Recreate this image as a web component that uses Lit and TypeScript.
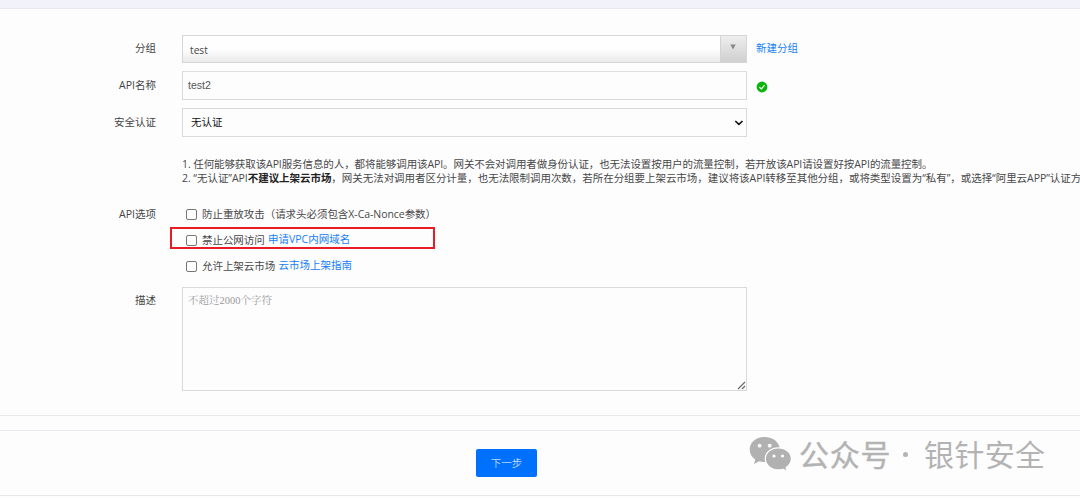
import { LitElement, html, css, svg } from "lit";
import { customElement, property } from "lit/decorators.js";

@customElement("form-row")
class FormRow extends LitElement {
  @property() label = "";
  static styles = css`
    :host { display: flex; align-items: flex-start; }
    .label { width: 156px; margin-right: 26px; text-align: right; flex: none; line-height: 16px; padding-top: var(--label-top, 5px); color: #444; }
  `;
  render() {
    return html`<div class="label">${this.label}</div><slot></slot>`;
  }
}

@customElement("app-root")
class AppRoot extends LitElement {
  static styles = css`
    :host { display: block; width: 1080px; height: 498px; overflow: hidden; position: relative; background: #fdfdfe;
      font: 10.5px/16px "Open Sans", "Noto Sans CJK SC", sans-serif; color: #484848; white-space: nowrap; }
    * { box-sizing: border-box; }
    .topbar { height: 9px; background: #f1f2fa; border-bottom: 1px solid #e6e8f2; }
    .form { padding-top: 26px; height: 406px; }
    .link { color: #1780f7; }
    .field { width: 565px; border: 1px solid #d9d9d9; flex: none; display: flex; }
    .group { height: 28px; --label-top: 5px; margin-bottom: 8px; }
    .name { height: 29px; --label-top: 6px; margin-bottom: 8px; }
    .auth { height: 29px; --label-top: 6px; margin-bottom: 20px; }
    .picker { height: 28px; background: linear-gradient(#fefefe 50%, #eaeaea); border-color: #d6d6d6; justify-content: space-between; }
    .picker-text { padding: 6px 0 0 7px; font-size: 10.2px; }
    .picker-arrow { width: 26px; border-left: 1px solid #d3d3d3; background: linear-gradient(#eee, #cfcfcf); padding: 8px 0 0 9px; }
    .picker-arrow svg, .valid, .chevron { display: block; }
    .beside { margin: 5px 0 0 9px; }
    .input { height: 29px; border-top-color: #dedede; font-family: "Liberation Sans", sans-serif; padding: 5px 0 0 5px; color: #555; }
    .valid { margin: 10px 0 0 9px; }
    .native { height: 29px; padding: 5px 2px 0 8px; color: #111; justify-content: space-between; }
    .chevron { margin-top: 4px; }
    .notes { padding-left: 182px; line-height: 14px; height: 28px; margin-bottom: 16px; }
    .notes b { color: #222; }
    .first { letter-spacing: -0.09px; }
    .second { letter-spacing: -0.045px; }
    .options { --label-top: 5px; height: 86px; }
    .list { display: flex; flex-direction: column; }
    .option { height: 26px; display: flex; align-items: center; padding-left: 4px; }
    .box { width: 11px; height: 11px; border: 1px solid #767676; border-radius: 2px; background: #fff; margin-right: 5px; }
    .option .link { margin-left: 3px; position: relative; top: -1px; }
    .option .text { letter-spacing: -0.05px; }
    .option .text + .link { margin-left: 3.3px; }
    .mark { position: absolute; left: 170px; top: 227px; width: 265px; height: 22px; border: 2px solid #e91c26; }
    .area { height: 104px; position: relative; padding: 5px 0 0 5px; color: #999; font-family: "Liberation Serif", "Noto Serif CJK SC", "Noto Sans CJK SC", serif; }
    .grip { position: absolute; right: 0; bottom: 0; }
    .divider { height: 16px; border-top: 1px solid #e8e9ec; border-bottom: 1px solid #e8eaf0; }
    .footer { height: 65px; border-bottom: 1px solid #e6e7ea; display: flex; padding: 18px 0 0 476px; }
    .next { width: 61px; height: 28px; border-radius: 2px; background: #0070ff; color: #fff; line-height: 28px; text-align: center; font-weight: 300; }
    .brand { position: absolute; left: 749px; top: 432px; display: flex; align-items: center; height: 44px; color: #b3b3b3; font: 30px/44px "Noto Sans CJK SC", sans-serif; letter-spacing: 0.7px; }
    .brand svg { margin: 0 7px 0 0; }
    .brand span { position: relative; top: -1px; }
    .brand .dot { width: 5px; height: 5px; border-radius: 50%; background: #b3b3b3; margin: 0 16px 0 12px; top: 0; }
    .official { -webkit-text-stroke: 0.4px #b3b3b3; }
    .account { letter-spacing: 0.3px; }
  `;

  private option(text: string, link = "") {
    return html`<div class="option"><span class="box"></span><span class="text">${text}</span>${link ? html`<span class="link">${link}</span>` : ""}</div>`;
  }

  private logo() {
    return svg`<svg width="43" height="36" viewBox="0 0 43 36">
      <path fill="#b1b1b1" d="M15.500 1C7 1 .7 6.500 .7 13.500c0 4.200 2.100 7.600 5.600 10l-1.300 4.400 5.200-2.600c2 .6 3.700.8 5.800.8 8.500 0 14.800-5.500 14.800-12.600S24 1 15.500 1Z"/>
      <path fill="#b1b1b1" stroke="#fdfdfe" stroke-width="1.300" d="M29.300 11.800c-7.400 0-13 4.900-13 11s5.600 11.100 13 11.100c1.600 0 3.200-.2 4.600-.6l4.500 2.200-1.200-3.900c3.200-2 5.200-5.200 5.200-8.800 0-6.100-5.700-11-13.100-11Z"/>
      <g fill="#fdfdfe"><circle cx="10.600" cy="9.700" r="1.900"/><circle cx="20.700" cy="9.700" r="1.900"/><circle cx="25" cy="20" r="1.600"/><circle cx="33.500" cy="20" r="1.600"/></g>
    </svg>`;
  }

  render() {
    return html`
      <div class="topbar"></div>
      <div class="form">
        <form-row class="group" label="分组">
          <div class="field picker"><span class="picker-text">test</span>
            <span class="picker-arrow"><svg width="6" height="6"><path fill="#888" d="M.3 .5h5.400L3 5.500Z"/></svg></span></div>
          <span class="link beside">新建分组</span>
        </form-row>
        <form-row class="name" label="API名称">
          <div class="field input">test2</div>
          <svg class="valid" width="12" height="12" viewBox="0 0 12 12"><circle cx="6" cy="6" r="5.400" fill="#09b509"/><path d="m3.400 6.100 1.900 1.900 3.400-3.800" fill="none" stroke="#fff" stroke-width="1.200"/></svg>
        </form-row>
        <form-row class="auth" label="安全认证">
          <div class="field native">无认证<svg class="chevron" width="10" height="9" viewBox="0 0 10 9"><path d="m1.300 3 3.600 3.300L8.500 3" fill="none" stroke="#111" stroke-width="1.600"/></svg></div>
        </form-row>
        <div class="notes">
          <div class="first">1. 任何能够获取该API服务信息的人，都将能够调用该API。网关不会对调用者做身份认证，也无法设置按用户的流量控制，若开放该API请设置好按API的流量控制。</div>
          <div class="second">2. “无认证”API<b>不建议上架云市场</b>，网关无法对调用者区分计量，也无法限制调用次数，若所在分组要上架云市场，建议将该API转移至其他分组，或将类型设置为“私有”，或选择“阿里云APP”认证方</div>
        </div>
        <form-row class="options" label="API选项">
          <div class="list">
            ${this.option("防止重放攻击（请求头必须包含X-Ca-Nonce参数）")}
            ${this.option("禁止公网访问", "申请VPC内网域名")}
            ${this.option("允许上架云市场", "云市场上架指南")}
          </div>
        </form-row>
        <form-row class="desc" label="描述">
          <div class="field area">不超过2000个字符<svg class="grip" width="9" height="9"><path d="M1 8 8 1M5 8l3-3" stroke="#666" stroke-width="1.100"/></svg></div>
        </form-row>
      </div>
      <div class="divider"></div>
      <div class="footer"><div class="next">下一步</div></div>
      <div class="mark"></div>
      <div class="brand">${this.logo()}<span class="official">公众号</span><span class="dot"></span><span class="account">银针安全</span></div>
    `;
  }
}
